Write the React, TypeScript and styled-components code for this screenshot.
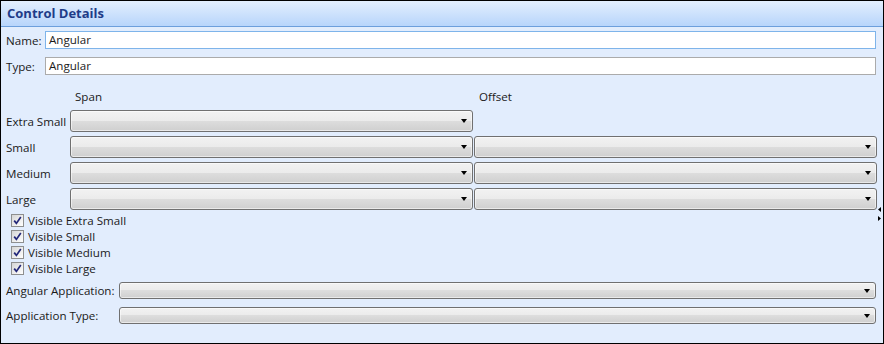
import React from "react";
import styled, { createGlobalStyle } from "styled-components";

const Global = createGlobalStyle`
  html, body { margin: 0; padding: 0; background: #fff; }
  body { font-family: "Open Sans", "Noto Sans", sans-serif; font-size: 11.6px; color: #1a1a1a; }
  * { box-sizing: border-box; }
`;

const Panel = styled.div`
  position: relative;
  width: 884px;
  height: 344px;
  border: 1px solid #000;
  background: #e2edfd;
  display: flex;
  flex-direction: column;
`;

const Header = styled.div`
  height: 26px;
  flex: none;
  border-bottom: 1px solid #6d9fdc;
  background: linear-gradient(#e3effe, #b8d5fb);
  display: flex;
  align-items: center;
  padding-left: 6px;
  padding-bottom: 1px;
  font-weight: 700;
  font-size: 13px;
  color: #1f3c88;
`;

const Body = styled.div`
  padding: 4px 7px 0 5px;
  display: flex;
  flex-direction: column;
`;

const FieldRow = styled.div<{ $mt?: number }>`
  display: grid;
  grid-template-columns: 39px 1fr;
  align-items: center;
  height: 18px;
  margin-top: ${(p) => p.$mt ?? 0}px;
`;

const Label = styled.span`
  white-space: nowrap;
  line-height: 14px;
  padding-top: 1px;
`;

const TextInput = styled.div<{ $focus?: boolean }>`
  height: 18px;
  background: #fff;
  border: 1px solid ${(p) => (p.$focus ? "#7eb4ea" : "#ababab")};
  padding-left: 3px;
  display: flex;
  align-items: center;
  line-height: 14px;
`;

const Headings = styled.div`
  display: grid;
  grid-template-columns: 63px 403px 403px;
  column-gap: 1px;
  margin-top: 15px;
  height: 14px;
  line-height: 14px;
  margin-bottom: 6px;
`;

const Heading = styled.span`
  padding-left: 5px;
`;

const SizeGrid = styled.div`
  display: grid;
  grid-template-columns: 63px 403px 403px;
  grid-auto-rows: 22px;
  column-gap: 1px;
  row-gap: 4px;
  align-items: center;
`;

const Combo = styled.div<{ $h?: number }>`
  position: relative;
  height: ${(p) => p.$h ?? 22}px;
  border: 1px solid #707070;
  border-radius: 3px;
  background: linear-gradient(#f2f2f2 0%, #ebebeb 50%, #dddddd 50%, #cfcfcf 100%);
  box-shadow: inset 0 0 0 1px rgba(255, 255, 255, 0.55);
  display: flex;
  align-items: center;
  justify-content: flex-end;
  padding-right: 5px;
`;

const Arrow = styled.span`
  width: 0;
  height: 0;
  border-left: 3.5px solid transparent;
  border-right: 3.5px solid transparent;
  border-top: 4px solid #000;
`;

const Checks = styled.div`
  display: flex;
  flex-direction: column;
  margin-top: 2px;
  padding-left: 5px;
`;

const CheckRow = styled.label`
  display: flex;
  align-items: center;
  height: 16px;
  gap: 4px;
`;

const Box = styled.span`
  width: 13px;
  height: 13px;
  border: 1px solid #8e8f8f;
  background: linear-gradient(135deg, #d6d6d6, #ffffff);
  display: flex;
  align-items: center;
  justify-content: center;
`;

const AppRow = styled.div<{ $mt: number }>`
  display: grid;
  grid-template-columns: 113px 1fr;
  align-items: center;
  margin-top: ${(p) => p.$mt}px;
`;

const Splitter = styled.div`
  position: absolute;
  right: 1px;
  top: 206px;
  display: flex;
  flex-direction: column;
  gap: 4px;
`;

const Check = () => (
  <Box>
    <svg width="9" height="9" viewBox="0 0 9 9">
      <path d="M1.2 4.6 L3.4 7.4 L7.8 1" stroke="#23287a" strokeWidth="1.7" fill="none" />
    </svg>
  </Box>
);

const Select = ({ h }: { h?: number }) => (
  <Combo $h={h}>
    <Arrow />
  </Combo>
);

export default function App() {
  const sizes = ["Extra Small", "Small", "Medium", "Large"];
  const checks = ["Visible Extra Small", "Visible Small", "Visible Medium", "Visible Large"];
  return (
    <>
      <Global />
      <Panel>
        <Header>Control Details</Header>
        <Body>
          <FieldRow>
            <Label>Name:</Label>
            <TextInput $focus>Angular</TextInput>
          </FieldRow>
          <FieldRow $mt={8}>
            <Label>Type:</Label>
            <TextInput>Angular</TextInput>
          </FieldRow>
          <Headings>
            <span />
            <Heading>Span</Heading>
            <Heading>Offset</Heading>
          </Headings>
          <SizeGrid>
            {sizes.map((s, i) => (
              <React.Fragment key={s}>
                <Label>{s}</Label>
                <Select />
                {i === 0 ? <span /> : <Select />}
              </React.Fragment>
            ))}
          </SizeGrid>
          <Checks>
            {checks.map((c) => (
              <CheckRow key={c}>
                <Check />
                <span>{c}</span>
              </CheckRow>
            ))}
          </Checks>
          <AppRow $mt={6}>
            <Label>Angular Application:</Label>
            <Select h={17} />
          </AppRow>
          <AppRow $mt={8}>
            <Label>Application Type:</Label>
            <Select h={17} />
          </AppRow>
        </Body>
        <Splitter>
          <svg width="4" height="5" viewBox="0 0 4 5"><path d="M3 0 L0 2.5 L3 5 Z" fill="#000" /></svg>
          <svg width="4" height="5" viewBox="0 0 4 5"><path d="M0 0 L3 2.5 L0 5 Z" fill="#000" /></svg>
        </Splitter>
      </Panel>
    </>
  );
}
